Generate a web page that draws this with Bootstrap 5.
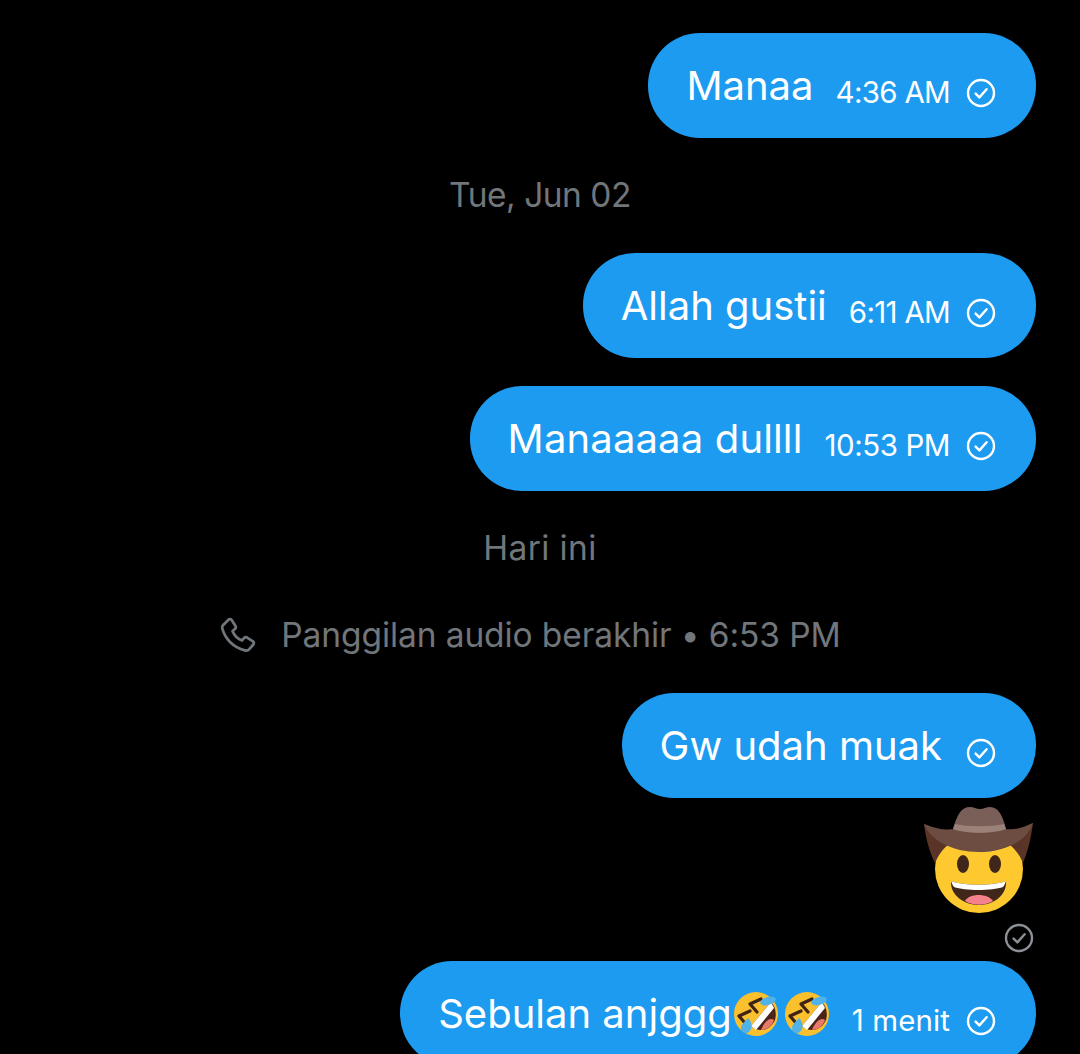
<!DOCTYPE html>
<html lang="id">
<head>
  <meta charset="UTF-8" />
  <meta name="viewport" content="width=device-width, initial-scale=1" />
  <title>Pesan</title>
  <link href="https://cdn.jsdelivr.net/npm/bootstrap@5.3.3/dist/css/bootstrap.min.css" rel="stylesheet" />
  <style>
    html, body {
      background: #000;
      height: 1054px;
      overflow: hidden;
    }

    .chat-wrap {
      font-family: Inter, "Liberation Sans", sans-serif;
      padding: 33px 44px 0 0;
    }

    .bubble {
      background: #1d9bf0;
      color: #fff;
      height: 105px;
      border-radius: 52px;
      padding: 0 40px 0 38px;
      flex-shrink: 0;
    }

    .bubble-text {
      font-size: 40px;
      line-height: 1;
    }

    .text-wide {
      letter-spacing: 0.15px;
    }

    .bubble-time {
      font-size: 29.5px;
      line-height: 1;
      margin-top: 15px;
      margin-left: 22px;
      letter-spacing: -0.7px;
    }

    .time-mid {
      letter-spacing: -0.45px;
    }

    .time-wide {
      letter-spacing: 0.1px;
    }

    .tick {
      width: 30px;
      height: 30px;
      margin-top: 15px;
    }

    .day-label {
      color: #71767b;
      font-size: 33.5px;
      line-height: 40px;
      letter-spacing: -0.5px;
      margin-left: 44px;
    }

    .label-wide {
      letter-spacing: 0.4px;
    }

    .call-row {
      color: #71767b;
      font-size: 33.5px;
      line-height: 40px;
      letter-spacing: -0.1px;
      margin-left: 24px;
      height: 40px;
    }

    .call-icon {
      width: 38px;
      height: 38px;
    }

    .cowboy {
      width: 109px;
      height: 110px;
      margin-right: 3px;
    }

    .tick-grey {
      width: 30px;
      height: 30px;
      margin-right: 2px;
      color: #8b9096;
    }

    .rofl {
      width: 46px;
      height: 46px;
    }

    .rofl-first {
      margin-left: 1px;
    }

    .rofl-next {
      margin-left: 5px;
    }

    .gap-a { margin-top: 37px; }
    .gap-b { margin-top: 38px; }
    .gap-c { margin-top: 28px; }
    .gap-d { margin-top: 37px; }
    .gap-e { margin-top: 47px; }
    .gap-f { margin-top: 38px; }
    .gap-g { margin-top: 7px; }
    .gap-h { margin-top: 8px; }
    .gap-i { margin-top: 8px; }
  </style>
</head>
<body>

  <svg width="0" height="0" class="position-absolute">
    <symbol id="tickIcon" viewBox="0 0 30 30">
      <circle cx="15" cy="15" r="13" fill="none" stroke="currentColor" stroke-width="2.4" />
      <path d="M9.6 15.6l3.8 3.8 7.2-8.2" fill="none" stroke="currentColor" stroke-width="2.4" stroke-linecap="round" stroke-linejoin="round" />
    </symbol>
    <symbol id="roflIcon" viewBox="0 0 46 46">
      <circle cx="23" cy="23" r="22" fill="#fbc02d" />
      <path d="M38 11 L18 35 C25 42 37 40 42 29 C44 22 42 15 38 11 Z" fill="#4a2418" />
      <path d="M38 11 L18 35 L23 39 L41 17 Z" fill="#fff" />
      <path d="M28 39 C34 39 39 35 41 29 C37 26 31 31 28 39 Z" fill="#e9796b" />
      <path d="M28 8 L17 13 L24 21" fill="none" stroke="#3e2316" stroke-width="3.2" stroke-linecap="round" stroke-linejoin="round" />
      <path d="M17 20 L6 25 L12 32" fill="none" stroke="#3e2316" stroke-width="3.2" stroke-linecap="round" stroke-linejoin="round" />
      <ellipse cx="35" cy="10" rx="8" ry="4" fill="#4fb3ea" transform="rotate(-15 35 10)" />
      <path d="M15 27 C19 31 20 37 16 41 C12 44 8 41 8 37 C8 34 12 30 15 27 Z" fill="#4fb3ea" />
    </symbol>
  </svg>

  <div class="chat-wrap d-flex flex-column align-items-end">

    <div class="bubble d-flex align-items-center">
      <span class="bubble-text">Manaa</span>
      <span class="bubble-time">4:36 AM</span>
      <svg class="tick ms-3 flex-shrink-0"><use href="#tickIcon" /></svg>
    </div>

    <div class="day-label gap-a align-self-center">Tue, Jun 02</div>

    <div class="bubble gap-b d-flex align-items-center">
      <span class="bubble-text">Allah gustii</span>
      <span class="bubble-time">6:11 AM</span>
      <svg class="tick ms-3 flex-shrink-0"><use href="#tickIcon" /></svg>
    </div>

    <div class="bubble gap-c d-flex align-items-center">
      <span class="bubble-text text-wide">Manaaaaa dullll</span>
      <span class="bubble-time time-mid">10:53 PM</span>
      <svg class="tick ms-3 flex-shrink-0"><use href="#tickIcon" /></svg>
    </div>

    <div class="day-label label-wide gap-d align-self-center">Hari ini</div>

    <div class="call-row gap-e align-self-center d-flex align-items-center gap-4">
      <svg class="call-icon flex-shrink-0" viewBox="0 0 36 36" fill="none" stroke="#71767b" stroke-width="2.6" stroke-linejoin="round">
        <path d="M4 8.5 L9 3.5 C10 2.7 11.3 2.8 12 3.8 L15.6 9.4 C16.2 10.4 16 11.5 15.1 12.3 L12.8 14.2 C14.4 18.4 17.6 21.6 21.8 23.2 L23.7 20.9 C24.5 20 25.6 19.8 26.6 20.4 L32.2 24 C33.2 24.7 33.3 26 32.5 27 L28.5 31.6 C27.5 32.7 26 33 24.5 32.6 C13.5 29.5 6 22 3 11.5 C2.7 10.4 3.2 9.3 4 8.5 Z" />
      </svg>
      <span>Panggilan audio berakhir • 6:53 PM</span>
    </div>

    <div class="bubble gap-f d-flex align-items-center">
      <span class="bubble-text">Gw udah muak</span>
      <svg class="tick ms-4 flex-shrink-0"><use href="#tickIcon" /></svg>
    </div>

    <svg class="cowboy gap-g" viewBox="0 0 109 110" role="img" aria-label="cowboy">
      <circle cx="55" cy="64" r="44" fill="#fdc92f" />
      <path d="M0 19 C2 35 6 48 11 58 C16 46 24 38 36 32 Z" fill="#5a3527" />
      <path d="M109 18 C107 35 103 48 99 58 C94 46 86 38 74 32 Z" fill="#5a3527" />
      <path d="M0 19 C14 25 24 25 30 24 L81 24 C88 25 98 24 109 18 C104 35 82 47 55 47 C28 47 6 35 0 19 Z" fill="#6d4c41" />
      <path d="M29 24 C33 10 37 2 46 2 C50 2 52 4 56 4 C60 4 62 2 66 2 C75 2 79 12 82 24 C68 29 43 29 29 24 Z" fill="#795f57" />
      <path d="M31 19 C44 22 67 22 80 19 L82 24 C68 29 43 29 29 24 Z" fill="#9b8279" />
      <ellipse cx="39" cy="59" rx="6" ry="9" fill="#40271a" />
      <ellipse cx="71" cy="59" rx="6" ry="9" fill="#40271a" />
      <path d="M27 76 C40 81 69 81 82 76 C83 90 70 100 55 100 C40 100 26 90 27 76 Z" fill="#40271a" />
      <path d="M27 76 C40 81 69 81 82 76 C81 79 80 81 79 82 C68 86 41 86 30 82 C29 81 28 79 27 76 Z" fill="#fff" />
      <path d="M41 96 C45 88 64 88 69 96 C61 101 49 101 41 96 Z" fill="#f4818c" />
    </svg>

    <svg class="tick-grey gap-h"><use href="#tickIcon" /></svg>

    <div class="bubble gap-i d-flex align-items-center">
      <span class="bubble-text d-flex align-items-center">Sebulan anjggg<svg class="rofl rofl-first"><use href="#roflIcon" /></svg><svg class="rofl rofl-next"><use href="#roflIcon" /></svg></span>
      <span class="bubble-time time-wide">1 menit</span>
      <svg class="tick ms-3 flex-shrink-0"><use href="#tickIcon" /></svg>
    </div>

  </div>

  <script src="https://cdn.jsdelivr.net/npm/bootstrap@5.3.3/dist/js/bootstrap.bundle.min.js"></script>
</body>
</html>
